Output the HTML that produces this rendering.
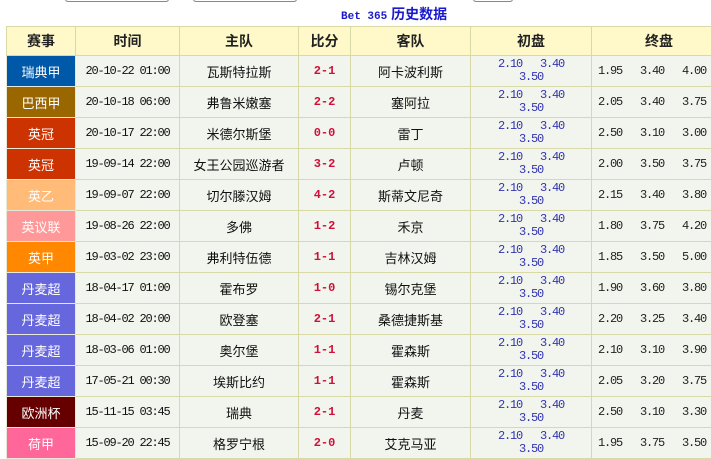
<!DOCTYPE html>
<html><head><meta charset="utf-8"><style>
body{margin:0;background:#fff;width:711px;height:459px;overflow:hidden;position:relative;font-family:"Liberation Sans","Noto Sans CJK SC",sans-serif;}
.box{position:absolute;top:-2px;height:3px;border:1px solid #888;border-top:none;border-radius:0 0 3px 3px;background:#fff}
.title{position:absolute;left:341px;top:4px;font-size:14px;font-weight:bold;color:#1a1acc;}
.title .m{font-family:"Liberation Mono",monospace;font-size:11px}
table{position:absolute;left:6px;top:26px;border-collapse:collapse;table-layout:fixed;width:720px;}
td,th{border:1px solid #d9d9a8;text-align:center;padding:0;font-size:13px;}
th{height:28px;background:#fff8c8;color:#222;font-weight:bold;font-size:14px}
td{height:30px;background:#f1f5ee;color:#111}
td.l{color:#fff;border-color:#e8e8d8}
.n{font-family:"Liberation Mono",monospace;font-size:12px;letter-spacing:-1.2px;white-space:pre;}
.s{color:#d0103a;font-weight:bold;font-family:"Liberation Mono",monospace;font-size:12px}
.o{color:#3333b0;line-height:13px}
.f{text-align:left;color:#222}
</style></head><body>
<div class="box" style="left:65px;width:102px"></div>
<div class="box" style="left:193px;width:102px"></div>
<div class="box" style="left:473px;width:38px"></div>
<div class="title"><span class="m">Bet 365</span> 历史数据</div>
<table>
<colgroup><col style="width:69px"><col style="width:104px"><col style="width:119px"><col style="width:52px"><col style="width:120px"><col style="width:121px"><col style="width:135px"></colgroup>
<tr><th>赛事</th><th>时间</th><th>主队</th><th>比分</th><th>客队</th><th>初盘</th><th>终盘</th></tr>
<tr><td class="l" style="background:#0058a8">瑞典甲</td><td class="n">20-10-22 01:00</td><td>瓦斯特拉斯</td><td class="s">2-1</td><td>阿卡波利斯</td><td class="n o">2.10   3.40
3.50</td><td class="n f"> 1.95   3.40   4.00</td></tr>
<tr><td class="l" style="background:#996600">巴西甲</td><td class="n">20-10-18 06:00</td><td>弗鲁米嫩塞</td><td class="s">2-2</td><td>塞阿拉</td><td class="n o">2.10   3.40
3.50</td><td class="n f"> 2.05   3.40   3.75</td></tr>
<tr><td class="l" style="background:#cc3300">英冠</td><td class="n">20-10-17 22:00</td><td>米德尔斯堡</td><td class="s">0-0</td><td>雷丁</td><td class="n o">2.10   3.40
3.50</td><td class="n f"> 2.50   3.10   3.00</td></tr>
<tr><td class="l" style="background:#cc3300">英冠</td><td class="n">19-09-14 22:00</td><td>女王公园巡游者</td><td class="s">3-2</td><td>卢顿</td><td class="n o">2.10   3.40
3.50</td><td class="n f"> 2.00   3.50   3.75</td></tr>
<tr><td class="l" style="background:#ffbb77">英乙</td><td class="n">19-09-07 22:00</td><td>切尔滕汉姆</td><td class="s">4-2</td><td>斯蒂文尼奇</td><td class="n o">2.10   3.40
3.50</td><td class="n f"> 2.15   3.40   3.80</td></tr>
<tr><td class="l" style="background:#ff9999">英议联</td><td class="n">19-08-26 22:00</td><td>多佛</td><td class="s">1-2</td><td>禾京</td><td class="n o">2.10   3.40
3.50</td><td class="n f"> 1.80   3.75   4.20</td></tr>
<tr><td class="l" style="background:#ff8800">英甲</td><td class="n">19-03-02 23:00</td><td>弗利特伍德</td><td class="s">1-1</td><td>吉林汉姆</td><td class="n o">2.10   3.40
3.50</td><td class="n f"> 1.85   3.50   5.00</td></tr>
<tr><td class="l" style="background:#6666dd">丹麦超</td><td class="n">18-04-17 01:00</td><td>霍布罗</td><td class="s">1-0</td><td>锡尔克堡</td><td class="n o">2.10   3.40
3.50</td><td class="n f"> 1.90   3.60   3.80</td></tr>
<tr><td class="l" style="background:#6666dd">丹麦超</td><td class="n">18-04-02 20:00</td><td>欧登塞</td><td class="s">2-1</td><td>桑德捷斯基</td><td class="n o">2.10   3.40
3.50</td><td class="n f"> 2.20   3.25   3.40</td></tr>
<tr><td class="l" style="background:#6666dd">丹麦超</td><td class="n">18-03-06 01:00</td><td>奥尔堡</td><td class="s">1-1</td><td>霍森斯</td><td class="n o">2.10   3.40
3.50</td><td class="n f"> 2.10   3.10   3.90</td></tr>
<tr><td class="l" style="background:#6666dd">丹麦超</td><td class="n">17-05-21 00:30</td><td>埃斯比约</td><td class="s">1-1</td><td>霍森斯</td><td class="n o">2.10   3.40
3.50</td><td class="n f"> 2.05   3.20   3.75</td></tr>
<tr><td class="l" style="background:#660000">欧洲杯</td><td class="n">15-11-15 03:45</td><td>瑞典</td><td class="s">2-1</td><td>丹麦</td><td class="n o">2.10   3.40
3.50</td><td class="n f"> 2.50   3.10   3.30</td></tr>
<tr><td class="l" style="background:#ff6699">荷甲</td><td class="n">15-09-20 22:45</td><td>格罗宁根</td><td class="s">2-0</td><td>艾克马亚</td><td class="n o">2.10   3.40
3.50</td><td class="n f"> 1.95   3.75   3.50</td></tr>
</table>
</body></html>
